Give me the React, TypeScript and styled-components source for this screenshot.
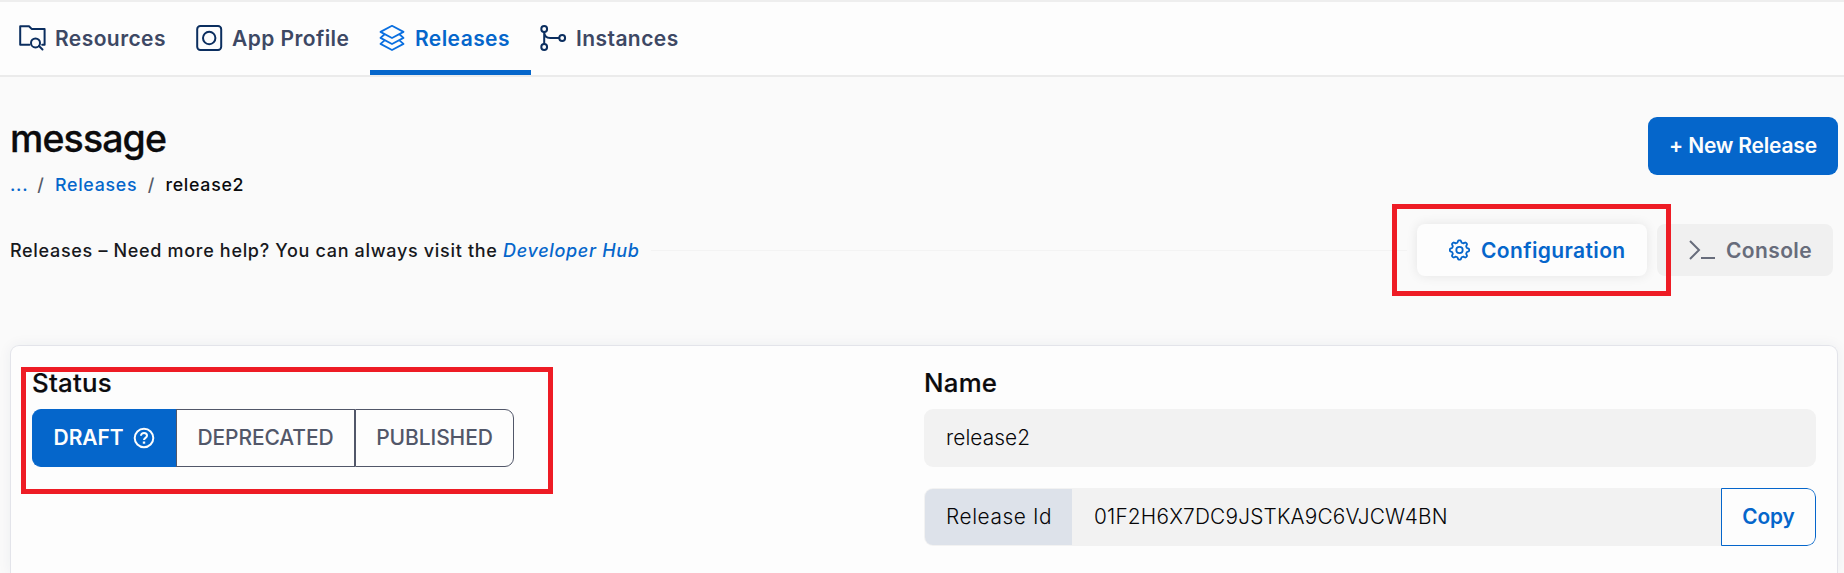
import React from "react";
import styled, { createGlobalStyle } from "styled-components";

const BLUE = "#0566cb";
const NAVY = "#0b2e5f";
const SLATE = "#525769";

const GlobalStyle = createGlobalStyle`
  *, *::before, *::after { box-sizing: border-box; }
  body {
    margin: 0;
    background: #fafafa;
    color: #0b0b0d;
    font-family: Inter, "Liberation Sans", sans-serif;
    overflow: hidden;
  }
  button, input { font: inherit; }
`;

const Page = styled.div`
  height: 573px;
  overflow: hidden;
  display: flex;
  flex-direction: column;
`;

const NavBar = styled.nav`
  flex: none;
  display: flex;
  height: 77px;
  padding-left: 10px;
  background: #fdfdfd;
  border-top: 2px solid #eeeeee;
  border-bottom: 2px solid #ebebeb;
`;

const Tab = styled.a<{ $width: number; $active?: boolean }>`
  display: flex;
  align-items: center;
  gap: 8px;
  width: ${(p) => p.$width}px;
  padding: 3px 0 0 9px;
  border-bottom: 5px solid ${(p) => (p.$active ? BLUE : "transparent")};
  color: ${(p) => (p.$active ? BLUE : "#3d4864")};
  font-size: 21px;
  line-height: 26px;
  font-weight: 600;
  letter-spacing: 0.42px;
  white-space: nowrap;
  svg {
    flex: none;
    color: ${(p) => (p.$active ? "#0a6fe0" : NAVY)};
  }
`;

const TabLabel = styled.span`
  padding-top: 3px;
`;

const Header = styled.header`
  flex: none;
  display: flex;
  justify-content: space-between;
  height: 123px;
  padding: 40px 6px 0 10px;
`;

const Title = styled.h1`
  margin: -1px 0 0;
  font-size: 37.5px;
  line-height: 46px;
  font-weight: 500;
  letter-spacing: -0.88px;
  -webkit-text-stroke: 0.3px currentColor;
`;

const Crumbs = styled.div`
  display: flex;
  gap: 10.5px;
  margin-top: 11px;
  font-size: 17.8px;
  line-height: 24px;
  font-weight: 500;
  letter-spacing: 0.7px;
`;

const Crumb = styled.span<{ $link?: boolean }>`
  color: ${(p) => (p.$link ? BLUE : "inherit")};
  &:first-child { margin-right: -1.5px; }
`;

const Slash = styled.span`
  color: #555a68;
`;

const PrimaryButton = styled.button`
  width: 190px;
  height: 58px;
  padding: 0 0 2px;
  border: 0;
  border-radius: 9px;
  background: ${BLUE};
  color: #fdfdfd;
  font-size: 21px;
  font-weight: 600;
  letter-spacing: -0.2px;
`;

const HelpRow = styled.div`
  flex: none;
  display: flex;
  align-items: center;
  height: 100px;
  padding: 0 11px 0 10px;
`;

const HelpText = styled.p`
  margin: 0;
  font-size: 18px;
  font-weight: 500;
  letter-spacing: 0.68px;
  white-space: nowrap;
  color: #17181c;
`;

const HubLink = styled.a`
  color: ${BLUE};
  font-style: italic;
`;

const Rule = styled.div`
  flex: 1;
  height: 1px;
  margin: 0 10px 0 11px;
  background: #f3f3f3;
`;

const Modes = styled.div`
  display: flex;
  gap: 10px;
`;

const ModeButton = styled.button<{ $width: number; $active?: boolean }>`
  position: relative;
  display: flex;
  align-items: center;
  gap: 10px;
  width: ${(p) => p.$width}px;
  height: 52px;
  padding: 0 0 0 32px;
  border: 0;
  border-radius: 8px;
  background: ${(p) => (p.$active ? "#fdfdfd" : "#f0f0f0")};
  box-shadow: ${(p) => (p.$active ? "0 0 12px rgba(0, 0, 0, 0.09)" : "none")};
  color: ${(p) => (p.$active ? BLUE : "#676c7b")};
  font-size: 21px;
  font-weight: 600;
  letter-spacing: 0.38px;
  z-index: ${(p) => (p.$active ? 1 : 0)};
  svg { flex: none; }
`;

const Highlight = styled.span<{ $inset: string }>`
  position: absolute;
  inset: ${(p) => p.$inset};
  border: 5px solid #ee1c25;
  pointer-events: none;
`;

const Card = styled.section`
  flex: 1;
  display: grid;
  grid-template-columns: 892px 892px;
  margin: 45px 6px 0 10px;
  padding: 21px 0 0 21px;
  border: 1px solid #e3e4ea;
  border-bottom: 0;
  border-radius: 9px 9px 0 0;
  background: #fdfdfd;
  box-shadow: 0 0 14px rgba(40, 50, 90, 0.06);
`;

const Field = styled.div`
  position: relative;
  justify-self: stretch;
`;

const StatusHighlight = styled(Highlight)`
  height: 127px;
`;

const Label = styled.h2`
  margin: 0;
  height: 42px;
  font-size: 25.8px;
  line-height: 32px;
  font-weight: 500;
  letter-spacing: 0.25px;
  -webkit-text-stroke: 0.2px currentColor;
`;

const StatusGroup = styled.div`
  display: flex;
  height: 58px;
`;

const StatusButton = styled.button<{ $width: number; $active?: boolean }>`
  display: flex;
  align-items: center;
  justify-content: center;
  gap: 10px;
  width: ${(p) => p.$width}px;
  padding: 0 0 2px;
  border: 1px solid ${(p) => (p.$active ? BLUE : SLATE)};
  background: ${(p) => (p.$active ? BLUE : "#fdfdfd")};
  color: ${(p) => (p.$active ? "#fdfdfd" : SLATE)};
  font-size: 21px;
  font-weight: ${(p) => (p.$active ? 600 : 500)};
  letter-spacing: -0.1px;
  &:first-child { border-radius: 9px 0 0 9px; border-right: 0; }
  &:last-child { border-radius: 0 9px 9px 0; }
  svg { position: relative; top: 1px; }
`;

const TextInput = styled.input`
  display: block;
  width: 892px;
  height: 58px;
  padding: 0 22px 2px;
  border: 0;
  border-radius: 9px;
  background: #f2f2f2;
  color: #060608;
  font-size: 20.8px;
  font-weight: 300;
  letter-spacing: 0.1px;
`;

const IdRow = styled.div`
  display: flex;
  width: 892px;
  height: 58px;
  margin-top: 21px;
  font-size: 20.8px;
  font-weight: 300;
  color: #060608;
  border-radius: 9px;
  background: #f2f2f2;
  overflow: hidden;
`;

const IdTag = styled.span`
  display: flex;
  align-items: center;
  width: 147px;
  margin: 1px 0 1px 1px;
  padding: 0 0 2px 21px;
  border-radius: 8px 0 0 8px;
  background: #dde2ea;
  letter-spacing: 0.6px;
`;

const IdValue = styled.span`
  flex: 1;
  display: flex;
  align-items: center;
  padding: 0 0 2px 22px;
  letter-spacing: 0.2px;
`;

const CopyButton = styled.button`
  width: 95px;
  padding: 0 0 2px;
  border: 1px solid ${BLUE};
  border-radius: 0 9px 9px 0;
  background: #fdfdfd;
  color: ${BLUE};
  font-weight: 600;
  letter-spacing: -0.1px;
`;

const FolderSearchIcon = () => (
  <svg width="28" height="28" viewBox="0 0 28 28" fill="none" stroke="currentColor" strokeWidth="2" strokeLinejoin="round" strokeLinecap="round">
    <path d="M10.5 20.7H1.2V2.2H10l2.6 2.7h13v15.8h-2.4" />
    <circle cx="16.5" cy="18.9" r="4.5" />
    <path d="m20 22 3.5 3.5" />
  </svg>
);

const ProfileIcon = () => (
  <svg width="28" height="28" viewBox="0 0 28 28" fill="none" stroke="currentColor" strokeWidth="2">
    <rect x="1.2" y="2" width="24" height="24" rx="3.2" />
    <circle cx="13.2" cy="14" r="6.2" />
  </svg>
);

const LayersIcon = () => (
  <svg width="28" height="28" viewBox="0 0 28 28" fill="none" stroke="currentColor" strokeWidth="1.8" strokeLinejoin="round">
    <path d="M13 1.8 24.5 7.9 13 14 1.5 7.9Z" />
    <path d="m5.6 10.3-4.1 3.6L13 20l11.5-6.1-4.1-3.6" />
    <path d="m5.6 16.4-4.1 3.5L13 26l11.5-6.1-4.1-3.5" />
  </svg>
);

const BranchIcon = () => (
  <svg width="28" height="28" viewBox="0 0 28 28" fill="none" stroke="currentColor" strokeWidth="2">
    <circle cx="4.2" cy="5" r="2.9" />
    <circle cx="4.2" cy="23" r="2.9" />
    <circle cx="22.2" cy="14" r="2.9" />
    <path d="M4.2 8v12M4.2 8c0 4 2 6 6 6h9" />
  </svg>
);

const GEAR_PATH = (() => {
  const pts: string[] = [];
  const steps = 96;
  for (let i = 0; i < steps; i++) {
    const a = (i / steps) * Math.PI * 2;
    const c = Math.cos(8 * a);
    const r = 8.6 + Math.max(-1, Math.min(1, c * 1.7)) * 1.05;
    pts.push(`${(10.5 + r * Math.sin(a)).toFixed(2)} ${(11 - r * Math.cos(a)).toFixed(2)}`);
  }
  return `M${pts.join("L")}Z`;
})();

const GearIcon = () => (
  <svg width="22" height="22" viewBox="0 0 22 22" fill="none" stroke="currentColor" strokeWidth="1.8" strokeLinejoin="round">
    <path d={GEAR_PATH} />
    <circle cx="10.5" cy="11" r="3.2" />
  </svg>
);

const ConsoleIcon = () => (
  <svg width="27" height="22" viewBox="0 0 27 22" fill="none" stroke="currentColor" strokeWidth="2">
    <path d="m1 2 9 9-9 9M12 19h14" />
  </svg>
);

const HelpIcon = () => (
  <svg width="22" height="22" viewBox="0 0 22 22" fill="none" stroke="currentColor" strokeWidth="2">
    <circle cx="11" cy="11" r="9.3" />
    <path d="M8 8.8C8 6.9 9.3 6 11 6s3 1 3 2.7c0 2.1-3 2.2-3 4.3" />
    <path d="M11 14.5v2.2" strokeWidth="2.4" />
  </svg>
);

export default function App() {
  return (
    <Page>
      <GlobalStyle />
      <NavBar>
        <Tab $width={177}><FolderSearchIcon /><TabLabel>Resources</TabLabel></Tab>
        <Tab $width={183}><ProfileIcon /><TabLabel>App Profile</TabLabel></Tab>
        <Tab $width={161} $active><LayersIcon /><TabLabel>Releases</TabLabel></Tab>
        <Tab $width={160}><BranchIcon /><TabLabel>Instances</TabLabel></Tab>
      </NavBar>
      <Header>
        <div>
          <Title>message</Title>
          <Crumbs>
            <Crumb $link>...</Crumb>
            <Slash>/</Slash>
            <Crumb $link>Releases</Crumb>
            <Slash>/</Slash>
            <Crumb>release2</Crumb>
          </Crumbs>
        </div>
        <PrimaryButton>+ New Release</PrimaryButton>
      </Header>
      <HelpRow>
        <HelpText>
          Releases – Need more help? You can always visit the <HubLink>Developer Hub</HubLink>
        </HelpText>
        <Rule />
        <Modes>
          <ModeButton $width={230} $active>
            <GearIcon />
            Configuration
            <Highlight $inset="-20px -24px -20px -25px" />
          </ModeButton>
          <ModeButton $width={176}>
            <ConsoleIcon />
            Console
          </ModeButton>
        </Modes>
      </HelpRow>
      <Card>
        <Field>
          <Label>Status</Label>
          <StatusGroup>
            <StatusButton $width={144} $active>DRAFT<HelpIcon /></StatusButton>
            <StatusButton $width={179}>DEPRECATED</StatusButton>
            <StatusButton $width={159}>PUBLISHED</StatusButton>
          </StatusGroup>
          <StatusHighlight $inset="0 371px auto -11px" />
        </Field>
        <Field>
          <Label>Name</Label>
          <TextInput defaultValue="release2" />
          <IdRow>
            <IdTag>Release Id</IdTag>
            <IdValue>01F2H6X7DC9JSTKA9C6VJCW4BN</IdValue>
            <CopyButton>Copy</CopyButton>
          </IdRow>
        </Field>
      </Card>
    </Page>
  );
}
